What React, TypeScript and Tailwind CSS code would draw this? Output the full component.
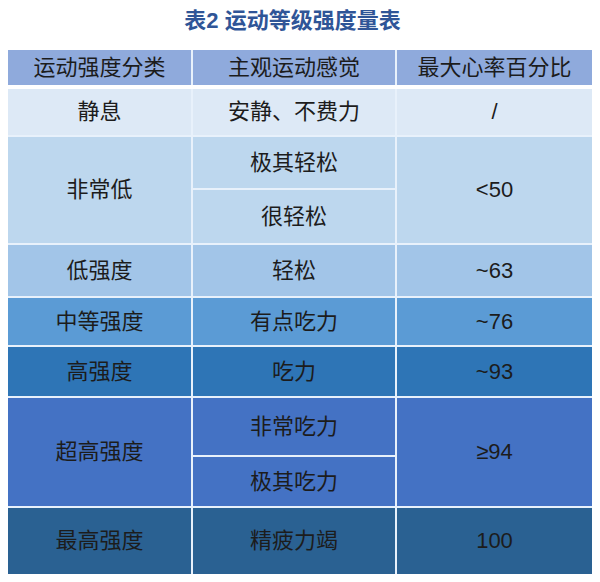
import React from "react";

const font = "font-['Liberation_Sans','Noto_Sans_CJK_SC',sans-serif]";

const cell =
  "flex items-center justify-center text-[22px] leading-none text-[#1c1c1c]";

export default function App() {
  return (
    <div className={clsx_(font, "w-[600px] h-[582px] bg-white")}>
      <div className="flex h-[50px] items-start justify-center pt-[7px] pr-[15px]">
        <h1 className="text-[22px] font-bold leading-[28px] text-[#2f5597]">
          表2 运动等级强度量表
        </h1>
      </div>

      <div className="mx-2 w-[584px]">
        <div className="grid grid-cols-[183px_202px_195px] gap-x-[2px] bg-[#e8f1fb]">
          <div className={clsx_(cell, "h-[35px] bg-[#8faadc]")}>运动强度分类</div>
          <div className={clsx_(cell, "h-[35px] bg-[#8faadc]")}>主观运动感觉</div>
          <div className={clsx_(cell, "h-[35px] bg-[#8faadc]")}>最大心率百分比</div>
        </div>

        <div className="mt-[4px] grid grid-cols-[183px_202px_195px] grid-rows-[46px_51px_53px_51px_47px_49px_57px_49px_66px] gap-[2px] bg-[#e8f1fb]">
          {/* 静息 */}
          <div className={clsx_(cell, "bg-[#dde9f6]")}>静息</div>
          <div className={clsx_(cell, "bg-[#dde9f6]")}>安静、不费力</div>
          <div className={clsx_(cell, "bg-[#dde9f6] text-[20px]")}>/</div>

          {/* 非常低 */}
          <div className={clsx_(cell, "row-span-2 bg-[#bdd7ee]")}>非常低</div>
          <div className={clsx_(cell, "bg-[#bdd7ee]")}>极其轻松</div>
          <div className={clsx_(cell, "row-span-2 bg-[#bdd7ee] text-[20px]")}>&lt;50</div>
          <div className={clsx_(cell, "bg-[#bdd7ee]")}>很轻松</div>

          {/* 低强度 */}
          <div className={clsx_(cell, "bg-[#a2c5e8]")}>低强度</div>
          <div className={clsx_(cell, "bg-[#a2c5e8]")}>轻松</div>
          <div className={clsx_(cell, "bg-[#a2c5e8] text-[20px]")}>~63</div>

          {/* 中等强度 */}
          <div className={clsx_(cell, "bg-[#5b9bd5]")}>中等强度</div>
          <div className={clsx_(cell, "bg-[#5b9bd5]")}>有点吃力</div>
          <div className={clsx_(cell, "bg-[#5b9bd5] text-[20px]")}>~76</div>

          {/* 高强度 */}
          <div className={clsx_(cell, "bg-[#2e75b6]")}>高强度</div>
          <div className={clsx_(cell, "bg-[#2e75b6]")}>吃力</div>
          <div className={clsx_(cell, "bg-[#2e75b6] text-[20px]")}>~93</div>

          {/* 超高强度 */}
          <div className={clsx_(cell, "row-span-2 bg-[#4472c4]")}>超高强度</div>
          <div className={clsx_(cell, "bg-[#4472c4]")}>非常吃力</div>
          <div className={clsx_(cell, "row-span-2 bg-[#4472c4] text-[20px]")}>≥94</div>
          <div className={clsx_(cell, "bg-[#4472c4]")}>极其吃力</div>

          {/* 最高强度 */}
          <div className={clsx_(cell, "bg-[#2a6192]")}>最高强度</div>
          <div className={clsx_(cell, "bg-[#2a6192]")}>精疲力竭</div>
          <div className={clsx_(cell, "bg-[#2a6192] text-[20px]")}>100</div>
        </div>
      </div>
    </div>
  );
}

function clsx_(...c: string[]) {
  return c.join(" ");
}
